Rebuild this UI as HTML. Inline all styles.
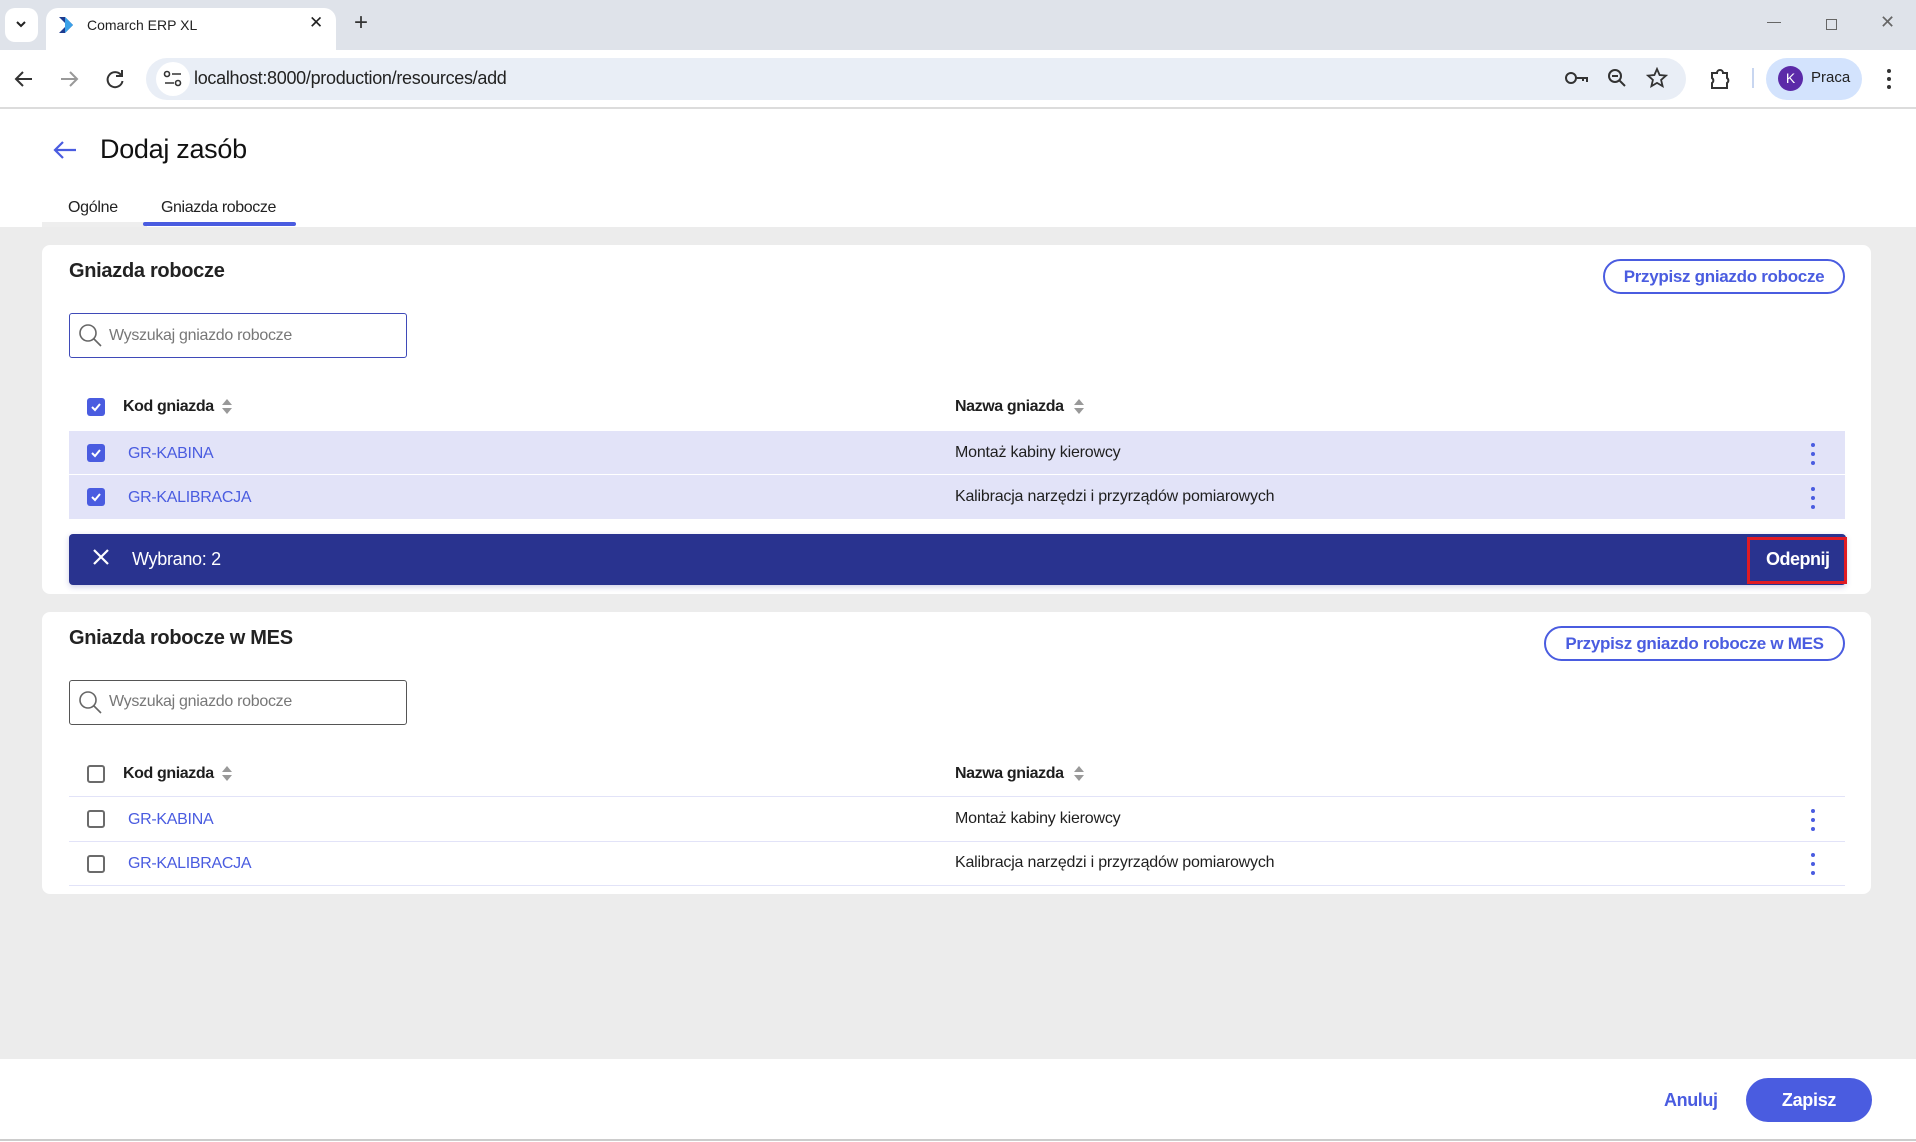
<!DOCTYPE html>
<html><head><meta charset="utf-8"><style>
*{box-sizing:border-box;margin:0;padding:0}
body{width:1916px;height:1142px;position:relative;overflow:hidden;background:#ececec;font-family:"Liberation Sans",sans-serif;color:#1f1f1f}
.a{position:absolute}
.cb{position:absolute;width:18px;height:18px;border-radius:3px;background:#4a5ce0}
.cb svg{position:absolute;left:2px;top:2px}
.cbe{position:absolute;width:18px;height:18px;border-radius:3px;border:2px solid #6b6b6b;background:#fff}
.link{color:#4a5ce0;font-size:16px;letter-spacing:-0.3px}
.t16{font-size:16px;letter-spacing:-0.2px}
.sort{position:absolute}
.dots{position:absolute;width:4px}
.dots i{display:block;width:4px;height:4px;border-radius:2px;background:#4a5ce0;margin-bottom:5px}
</style></head><body>
<!-- browser chrome -->
<div class="a" style="left:0;top:0;width:1916px;height:50px;background:#dfe3ea"></div>
<div class="a" style="left:5px;top:8px;width:33px;height:34px;background:#fff;border-radius:10px"></div>
<svg class="a" style="left:14px;top:19px" width="14" height="10"><path d="M3 3l4 4 4-4" stroke="#222" stroke-width="2" fill="none"/></svg>
<div class="a" style="left:46px;top:8px;width:290px;height:44px;background:#fff;border-radius:12px 12px 0 0"></div>
<svg class="a" style="left:58px;top:16px" width="18" height="18"><path d="M1 1h6l8 8-8 8H1l8-8z" fill="#1d3b8f"/><path d="M7 1l8 8-8 8z" fill="#3aa0e8"/></svg>
<div class="a" style="left:87px;top:17px;font-size:14px;color:#222">Comarch ERP XL</div>
<div class="a" style="left:309px;top:13px;font-size:17px;color:#222">✕</div>
<div class="a" style="left:354px;top:9px;font-size:24px;color:#333">+</div>
<div class="a" style="left:1767px;top:22px;width:14px;height:1px;background:#666"></div>
<div class="a" style="left:1826px;top:19px;width:11px;height:11px;border:1px solid #666"></div>
<div class="a" style="left:1880px;top:12px;font-size:18px;color:#666">✕</div>
<div class="a" style="left:0;top:50px;width:1916px;height:58px;background:#fff"></div>
<div class="a" style="left:0;top:107px;width:1916px;height:2px;background:#dcdcdc"></div>
<svg class="a" style="left:14px;top:70px" width="20" height="18"><path d="M18 9H3M9 2L2 9l7 7" stroke="#333" stroke-width="2" fill="none"/></svg>
<svg class="a" style="left:59px;top:70px" width="20" height="18"><path d="M2 9h15M11 2l7 7-7 7" stroke="#999" stroke-width="2" fill="none"/></svg>
<svg class="a" style="left:104px;top:68px" width="22" height="22"><path d="M17 7A7.5 7.5 0 1 0 18.5 13" stroke="#333" stroke-width="2" fill="none"/><path d="M18 2v6h-6" stroke="#333" stroke-width="2" fill="none"/></svg>
<div class="a" style="left:146px;top:58px;width:1540px;height:42px;background:#e9eef6;border-radius:21px"></div>
<div class="a" style="left:156px;top:62px;width:34px;height:34px;background:#fff;border-radius:17px"></div>
<svg class="a" style="left:163px;top:70px" width="20" height="18"><circle cx="4" cy="4" r="2.5" stroke="#333" fill="none" stroke-width="1.6"/><path d="M9 4h9M2 13h9" stroke="#333" stroke-width="1.6"/><circle cx="15" cy="13" r="2.5" stroke="#333" fill="none" stroke-width="1.6"/></svg>
<div class="a" style="left:194px;top:68px;font-size:18px;color:#222;letter-spacing:-0.3px">localhost:8000/production/resources/add</div>
<svg class="a" style="left:1565px;top:70px" width="24" height="16"><circle cx="6" cy="8" r="5" stroke="#333" stroke-width="2" fill="none"/><path d="M11 8h11v4M18 8v3" stroke="#333" stroke-width="2" fill="none"/></svg>
<svg class="a" style="left:1607px;top:68px" width="20" height="20"><circle cx="8" cy="8" r="6" stroke="#333" stroke-width="2" fill="none"/><path d="M5 8h6M12 12l6 6" stroke="#333" stroke-width="2"/></svg>
<svg class="a" style="left:1646px;top:67px" width="22" height="22"><path d="M11 2l2.6 6 6.4.6-4.9 4.3 1.5 6.3L11 15.9 5.4 19.2l1.5-6.3L2 8.6 8.4 8z" stroke="#333" stroke-width="1.8" fill="none"/></svg>
<svg class="a" style="left:1709px;top:68px" width="22" height="22"><path d="M3 5h5a3 3 0 016 0h4v5a3 3 0 010 5v5H3v-5a3 3 0 000-5z" stroke="#333" stroke-width="2" fill="none"/></svg>
<div class="a" style="left:1752px;top:68px;width:2px;height:20px;background:#c8d6f0"></div>
<div class="a" style="left:1766px;top:58px;width:96px;height:42px;background:#d3e3fd;border-radius:21px"></div>
<div class="a" style="left:1778px;top:66px;width:25px;height:25px;border-radius:13px;background:#5b2aa8;color:#fff;font-size:14px;text-align:center;line-height:25px">K</div>
<div class="a" style="left:1811px;top:69px;font-size:15px;color:#222">Praca</div>
<div class="a" style="left:1887px;top:69px"><div style="width:4px;height:4px;border-radius:2px;background:#333;margin-bottom:4px"></div><div style="width:4px;height:4px;border-radius:2px;background:#333;margin-bottom:4px"></div><div style="width:4px;height:4px;border-radius:2px;background:#333"></div></div>

<!-- header -->
<div class="a" style="left:0;top:109px;width:1916px;height:118px;background:#fff"></div>
<svg class="a" style="left:52px;top:140px" width="26" height="20"><path d="M24 10H3M11 2L3 10l8 8" stroke="#4a5ce0" stroke-width="2.2" fill="none"/></svg>
<div class="a" style="left:100px;top:134px;font-size:27px;color:#111;letter-spacing:-0.3px">Dodaj zasób</div>
<div class="a" style="left:42px;top:222px;width:105px;height:5px;background:#eee"></div>
<div class="a" style="left:68px;top:199px;font-size:16px;color:#222;letter-spacing:-0.3px">Ogólne</div>
<div class="a" style="left:161px;top:199px;font-size:16px;color:#222;letter-spacing:-0.4px">Gniazda robocze</div>
<div class="a" style="left:143px;top:222px;width:153px;height:4px;background:#4a5ce0;border-radius:2px"></div>

<!-- card 1 -->
<div class="a" style="left:42px;top:245px;width:1829px;height:349px;background:#fff;border-radius:8px"></div>
<div class="a" style="left:69px;top:260px;font-size:20px;font-weight:bold;color:#222;letter-spacing:-0.3px">Gniazda robocze</div>
<div class="a" style="left:1603px;top:259px;width:242px;height:35px;border:2px solid #4a5ce0;border-radius:18px;color:#4a5ce0;font-size:17px;font-weight:bold;text-align:center;line-height:31px;letter-spacing:-0.3px">Przypisz gniazdo robocze</div>
<div class="a" style="left:69px;top:313px;width:338px;height:45px;border:1px solid #3f4ab8;border-radius:3px"></div>
<svg class="a" style="left:78px;top:323px" width="26" height="26"><circle cx="10" cy="10" r="8" stroke="#666" stroke-width="1.6" fill="none"/><path d="M16 16l7 7" stroke="#666" stroke-width="1.6"/></svg>
<div class="a" style="left:109px;top:327px;font-size:16px;color:#777;letter-spacing:-0.3px">Wyszukaj gniazdo robocze</div>
<div class="cb" style="left:87px;top:398px"><svg width="14" height="14"><path d="M3 7l3 3 5-6" stroke="#fff" stroke-width="2" fill="none"/></svg></div>
<div class="a" style="left:123px;top:398px;font-size:16px;font-weight:bold;letter-spacing:-0.4px">Kod gniazda</div>
<svg class="sort" style="left:220px;top:398px" width="14" height="18"><path d="M2 7l5-6 5 6zM2 10l5 6 5-6z" fill="#999"/></svg>
<div class="a" style="left:955px;top:398px;font-size:16px;font-weight:bold;letter-spacing:-0.4px">Nazwa gniazda</div>
<svg class="sort" style="left:1072px;top:398px" width="14" height="18"><path d="M2 7l5-6 5 6zM2 10l5 6 5-6z" fill="#999"/></svg>
<div class="a" style="left:69px;top:431px;width:1776px;height:43px;background:#e2e3f8"></div>
<div class="a" style="left:69px;top:475px;width:1776px;height:44px;background:#e2e3f8"></div>
<div class="cb" style="left:87px;top:444px"><svg width="14" height="14"><path d="M3 7l3 3 5-6" stroke="#fff" stroke-width="2" fill="none"/></svg></div>
<div class="cb" style="left:87px;top:488px"><svg width="14" height="14"><path d="M3 7l3 3 5-6" stroke="#fff" stroke-width="2" fill="none"/></svg></div>
<div class="a link" style="left:128px;top:445px">GR-KABINA</div>
<div class="a link" style="left:128px;top:489px">GR-KALIBRACJA</div>
<div class="a t16" style="left:955px;top:444px">Montaż kabiny kierowcy</div>
<div class="a t16" style="left:955px;top:488px">Kalibracja narzędzi i przyrządów pomiarowych</div>
<div class="dots" style="left:1811px;top:443px"><i></i><i></i><i></i></div>
<div class="dots" style="left:1811px;top:487px"><i></i><i></i><i></i></div>
<div class="a" style="left:69px;top:534px;width:1777px;height:51px;background:#29338f;border-radius:4px;box-shadow:0 2px 6px rgba(60,60,160,.25)"></div>
<svg class="a" style="left:92px;top:548px" width="18" height="18"><path d="M2 2l14 14M16 2L2 16" stroke="#fff" stroke-width="2.2"/></svg>
<div class="a" style="left:132px;top:549px;font-size:18px;color:#fff;letter-spacing:-0.3px">Wybrano: 2</div>
<div class="a" style="left:1747px;top:537px;width:100px;height:47px;border:3px solid #e01b24"></div>
<div class="a" style="left:1766px;top:549px;font-size:18px;font-weight:bold;color:#fff;letter-spacing:-0.5px">Odepnij</div>

<!-- card 2 -->
<div class="a" style="left:42px;top:612px;width:1829px;height:282px;background:#fff;border-radius:8px"></div>
<div class="a" style="left:69px;top:627px;font-size:20px;font-weight:bold;color:#222;letter-spacing:-0.3px">Gniazda robocze w MES</div>
<div class="a" style="left:1544px;top:626px;width:301px;height:35px;border:2px solid #4a5ce0;border-radius:18px;color:#4a5ce0;font-size:17px;font-weight:bold;text-align:center;line-height:31px;letter-spacing:-0.3px">Przypisz gniazdo robocze w MES</div>
<div class="a" style="left:69px;top:680px;width:338px;height:45px;border:1px solid #555;border-radius:3px"></div>
<svg class="a" style="left:78px;top:690px" width="26" height="26"><circle cx="10" cy="10" r="8" stroke="#666" stroke-width="1.6" fill="none"/><path d="M16 16l7 7" stroke="#666" stroke-width="1.6"/></svg>
<div class="a" style="left:109px;top:693px;font-size:16px;color:#777;letter-spacing:-0.3px">Wyszukaj gniazdo robocze</div>
<div class="cbe" style="left:87px;top:765px"></div>
<div class="a" style="left:123px;top:765px;font-size:16px;font-weight:bold;letter-spacing:-0.4px">Kod gniazda</div>
<svg class="sort" style="left:220px;top:765px" width="14" height="18"><path d="M2 7l5-6 5 6zM2 10l5 6 5-6z" fill="#999"/></svg>
<div class="a" style="left:955px;top:765px;font-size:16px;font-weight:bold;letter-spacing:-0.4px">Nazwa gniazda</div>
<svg class="sort" style="left:1072px;top:765px" width="14" height="18"><path d="M2 7l5-6 5 6zM2 10l5 6 5-6z" fill="#999"/></svg>
<div class="a" style="left:69px;top:796px;width:1776px;height:1px;background:#e2e3f8"></div>
<div class="a" style="left:69px;top:841px;width:1776px;height:1px;background:#e2e3f8"></div>
<div class="a" style="left:69px;top:885px;width:1776px;height:1px;background:#e2e3f8"></div>
<div class="cbe" style="left:87px;top:810px"></div>
<div class="cbe" style="left:87px;top:855px"></div>
<div class="a link" style="left:128px;top:811px">GR-KABINA</div>
<div class="a link" style="left:128px;top:855px">GR-KALIBRACJA</div>
<div class="a t16" style="left:955px;top:810px">Montaż kabiny kierowcy</div>
<div class="a t16" style="left:955px;top:854px">Kalibracja narzędzi i przyrządów pomiarowych</div>
<div class="dots" style="left:1811px;top:809px"><i></i><i></i><i></i></div>
<div class="dots" style="left:1811px;top:853px"><i></i><i></i><i></i></div>

<!-- footer -->
<div class="a" style="left:0;top:1059px;width:1916px;height:83px;background:#fff"></div>
<div class="a" style="left:0;top:1139px;width:1916px;height:2px;background:#ccc"></div>
<div class="a" style="left:1664px;top:1090px;font-size:18px;font-weight:bold;color:#4a5ce0;letter-spacing:-0.4px">Anuluj</div>
<div class="a" style="left:1746px;top:1078px;width:126px;height:44px;background:#4a5ce0;border-radius:22px;color:#fff;font-size:18px;font-weight:bold;text-align:center;line-height:44px;letter-spacing:-0.3px">Zapisz</div>
</body></html>
